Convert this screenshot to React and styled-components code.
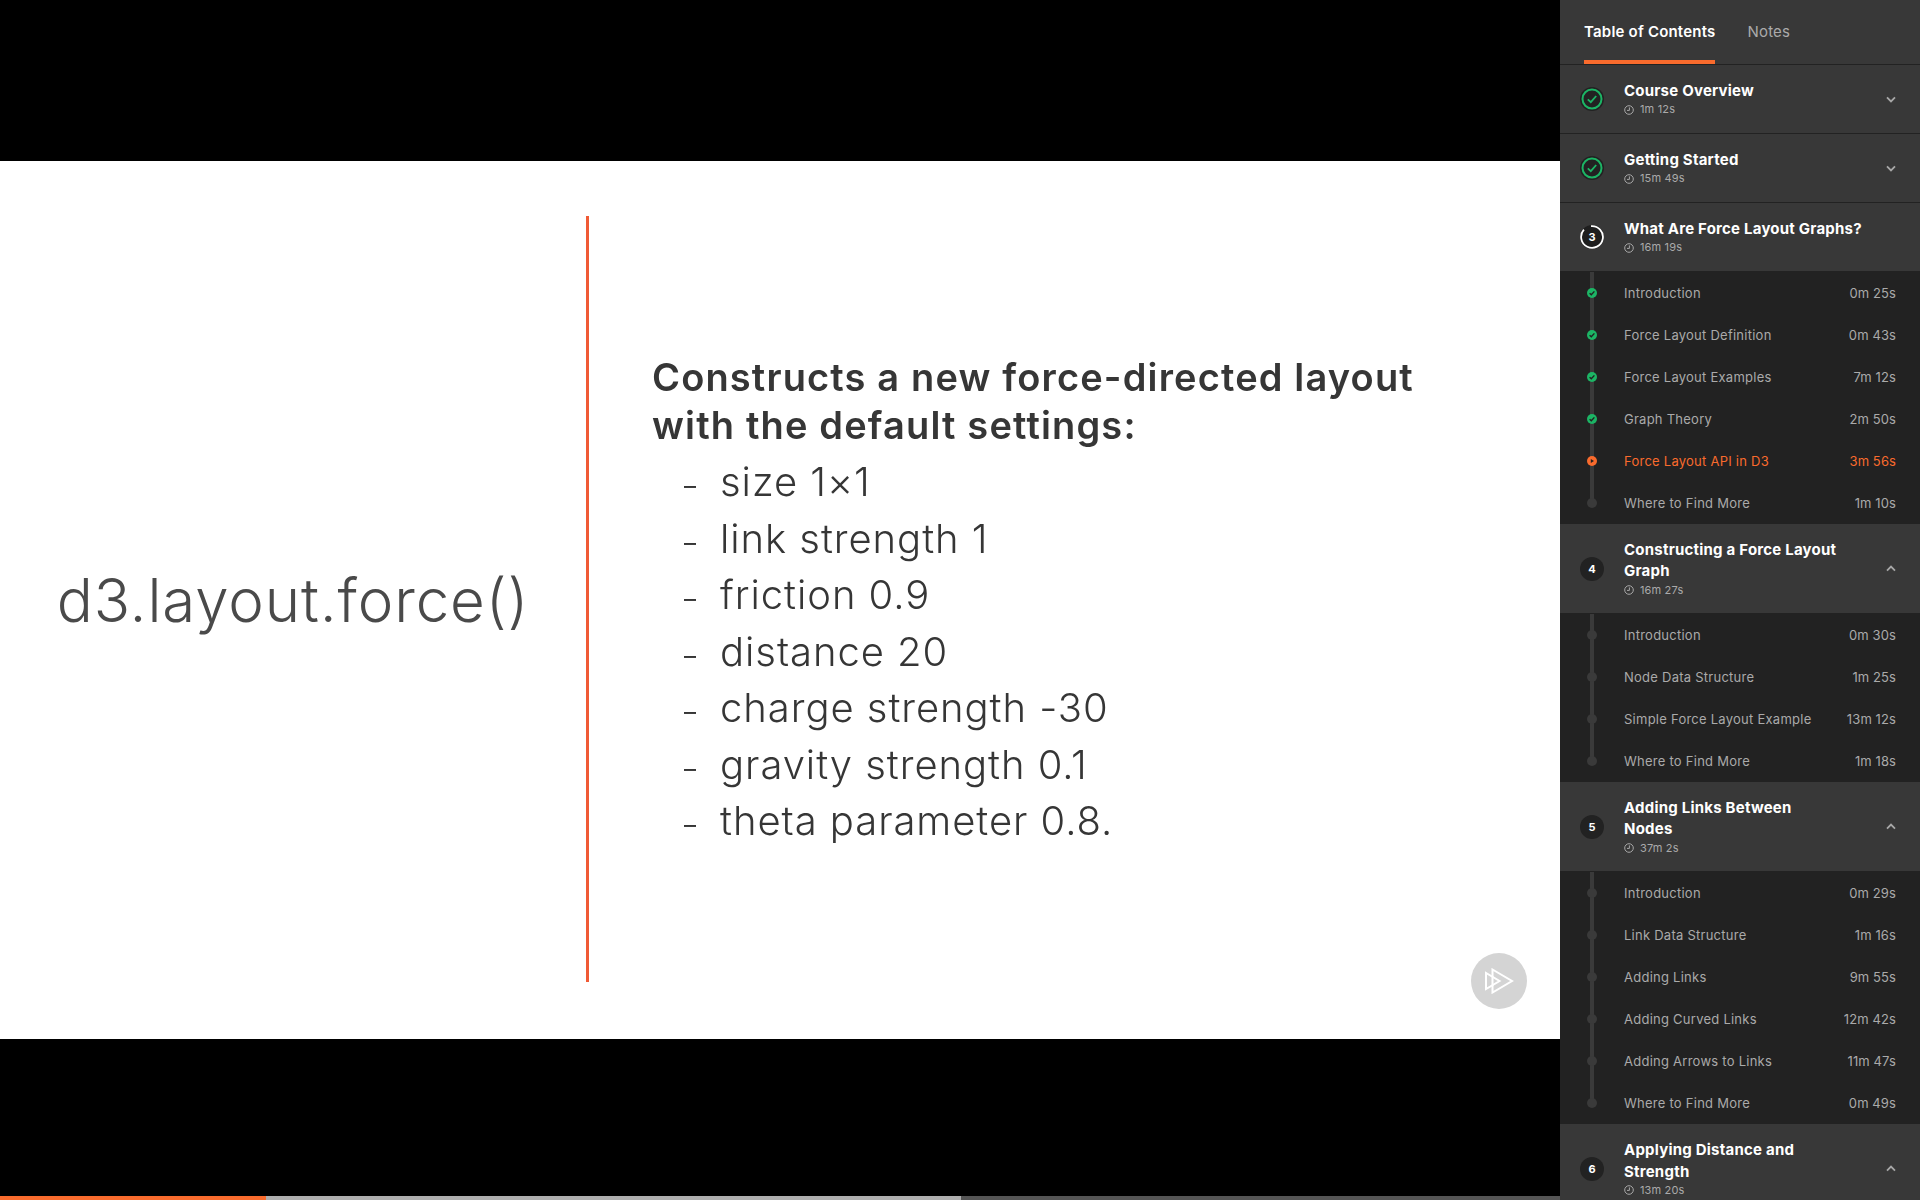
import React from 'react'
import styled, { createGlobalStyle } from 'styled-components'

const sections = [
  { title: 'Course Overview', time: '1m 12s', status: 'done' },
  { title: 'Getting Started', time: '15m 49s', status: 'done' },
  {
    title: 'What Are Force Layout Graphs?', time: '16m 19s', status: 'current', num: 3, open: true, noChevron: true,
    lessons: [
      ['Introduction', '0m 25s', 'done'],
      ['Force Layout Definition', '0m 43s', 'done'],
      ['Force Layout Examples', '7m 12s', 'done'],
      ['Graph Theory', '2m 50s', 'done'],
      ['Force Layout API in D3', '3m 56s', 'playing'],
      ['Where to Find More', '1m 10s', 'todo'],
    ],
  },
  {
    title: 'Constructing a Force Layout Graph', time: '16m 27s', num: 4, open: true,
    lessons: [
      ['Introduction', '0m 30s', 'todo'],
      ['Node Data Structure', '1m 25s', 'todo'],
      ['Simple Force Layout Example', '13m 12s', 'todo'],
      ['Where to Find More', '1m 18s', 'todo'],
    ],
  },
  {
    title: 'Adding Links Between Nodes', time: '37m 2s', num: 5, open: true,
    lessons: [
      ['Introduction', '0m 29s', 'todo'],
      ['Link Data Structure', '1m 16s', 'todo'],
      ['Adding Links', '9m 55s', 'todo'],
      ['Adding Curved Links', '12m 42s', 'todo'],
      ['Adding Arrows to Links', '11m 47s', 'todo'],
      ['Where to Find More', '0m 49s', 'todo'],
    ],
  },
  { title: 'Applying Distance and Strength', time: '13m 20s', num: 6, open: true },
]

const bullets = ['size 1×1', 'link strength 1', 'friction 0.9', 'distance 20', 'charge strength -30', 'gravity strength 0.1', 'theta parameter 0.8.']

function Clock() {
  return (
    <svg width="10" height="10" viewBox="0 0 10 10" fill="none" stroke="#a8a8a8" strokeWidth="1">
      <circle cx="5" cy="5" r="4.3" />
      <path d="M5.4 2.4V5.4H3" />
    </svg>
  )
}

function Chevron({ up }) {
  return (
    <svg width="10" height="7" viewBox="0 0 10 7" fill="none" stroke="#a8a8a8" strokeWidth="1.8">
      <path d={up ? 'M1 5.6L5 1.6L9 5.6' : 'M1 1.4L5 5.4L9 1.4'} />
    </svg>
  )
}

function StatusBadge({ section }) {
  if (section.status === 'done') {
    return (
      <svg width="24" height="24" viewBox="0 0 24 24" fill="none">
        <circle cx="12" cy="12" r="12" fill="#222" />
        <circle cx="12" cy="12" r="9.5" stroke="#1cb565" strokeWidth="2" />
        <path d="M7.8 12.4L10.8 15.2L16.2 9" stroke="#1cb565" strokeWidth="1.8" />
      </svg>
    )
  }
  if (section.status === 'current') {
    return (
      <BadgeWrap>
        <svg width="24" height="24" viewBox="0 0 24 24" fill="none">
          <circle cx="12" cy="12" r="12" fill="#1e1e1e" />
          <path d="M11 1.1A10.9 10.9 0 1 1 3.9 4.7" stroke="#fff" strokeWidth="1.8" />
        </svg>
        <BadgeNumber>{section.num}</BadgeNumber>
      </BadgeWrap>
    )
  }
  return <NumberCircle>{section.num}</NumberCircle>
}

function LessonDot({ status }) {
  if (status === 'done') {
    return (
      <DotSvg width="10" height="10" viewBox="0 0 10 10" fill="none">
        <circle cx="5" cy="5" r="5" fill="#1cb565" />
        <path d="M2.6 5.2L4.3 6.8L7.4 3.4" stroke="#222" strokeWidth="1.4" />
      </DotSvg>
    )
  }
  if (status === 'playing') {
    return (
      <DotSvg width="10" height="10" viewBox="0 0 10 10" fill="none">
        <circle cx="5" cy="5" r="5" fill="#f96b2d" />
        <path d="M3.8 3L7 5L3.8 7Z" fill="#222" />
      </DotSvg>
    )
  }
  return (
    <DotSvg width="10" height="10" viewBox="0 0 10 10">
      <circle cx="5" cy="5" r="5" fill="#3a3a3a" />
    </DotSvg>
  )
}

export default function App() {
  return (
    <>
      <GlobalStyle />
      <Page>
        <VideoColumn>
          <Slide>
            <CodePanel>
              <CodeTitle>d3.layout.force()</CodeTitle>
            </CodePanel>
            <Divider />
            <TextPanel>
              <SlideHeading>
                Constructs a new force-directed layout
                <br />
                with the default settings:
              </SlideHeading>
              <BulletList>
                {bullets.map((b) => (
                  <Bullet key={b}>
                    <Dash>–</Dash>
                    <span>{b}</span>
                  </Bullet>
                ))}
              </BulletList>
            </TextPanel>
            <Watermark>
              <svg width="30" height="26" viewBox="0 0 30 26" fill="none" stroke="#fff" strokeWidth="2">
                <path d="M8.5 1.5L28 13L8.5 24.5Z" />
                <path d="M2 5V21L15.5 13Z" />
              </svg>
            </Watermark>
          </Slide>
          <Progress>
            <ProgressPlayed />
            <ProgressBuffered />
          </Progress>
        </VideoColumn>
        <Sidebar>
          <Tabs>
            <Tab $active>Table of Contents</Tab>
            <Tab>Notes</Tab>
          </Tabs>
          {sections.map((s) => (
            <section key={s.title}>
              <SectionHeader>
                <BadgeCell>
                  <StatusBadge section={s} />
                </BadgeCell>
                <SectionText>
                  <SectionTitle>{s.title}</SectionTitle>
                  <SectionTime>
                    <Clock />
                    {s.time}
                  </SectionTime>
                </SectionText>
                {!s.noChevron && (
                  <ChevronCell>
                    <Chevron up={s.open} />
                  </ChevronCell>
                )}
              </SectionHeader>
              {s.lessons && (
                <LessonList>
                  {s.lessons.map(([name, time, status], i) => (
                    <Lesson key={name} $playing={status === 'playing'}>
                      <Marker $last={i === s.lessons.length - 1}>
                        <LessonDot status={status} />
                      </Marker>
                      <LessonName>{name}</LessonName>
                      <LessonTime>{time}</LessonTime>
                    </Lesson>
                  ))}
                </LessonList>
              )}
            </section>
          ))}
        </Sidebar>
      </Page>
    </>
  )
}

const GlobalStyle = createGlobalStyle`
  html, body {
    margin: 0;
    height: 100%;
    overflow: hidden;
    background: #000;
    font-family: "Inter", "Liberation Sans", sans-serif;
  }
`

const Page = styled.div`
  display: grid;
  grid-template-columns: 1560px 360px;
  height: 1200px;
  overflow: hidden;
`

const VideoColumn = styled.main`
  position: relative;
  display: flex;
  align-items: center;
  background: #000;
`

const Slide = styled.div`
  position: relative;
  display: flex;
  width: 1560px;
  height: 878px;
  background: #fff;
  color: #363636;
`

const CodePanel = styled.div`
  display: flex;
  align-items: center;
  justify-content: center;
  width: 586px;
`

const CodeTitle = styled.div`
  font-size: 60px;
  font-weight: 300;
  letter-spacing: 0.9px;
  color: #4a4a4a;
  filter: blur(0.5px);
`

const Divider = styled.div`
  width: 3px;
  margin: 55px 0 57px;
  background: #f05a35;
`

const TextPanel = styled.div`
  display: flex;
  flex-direction: column;
  justify-content: center;
  padding: 3px 0 0 63px;
  filter: blur(0.5px);
`

const SlideHeading = styled.div`
  font-size: 38px;
  font-weight: 600;
  line-height: 47.5px;
  letter-spacing: 1.15px;
`

const BulletList = styled.ul`
  list-style: none;
  margin: 4px 0 0;
  padding: 0 0 0 32px;
`

const Bullet = styled.li`
  display: flex;
  align-items: center;
  height: 56.5px;
  font-size: 40px;
  font-weight: 300;
  letter-spacing: 0.95px;
`

const Dash = styled.span`
  width: 36px;
  padding-top: 8px;
  font-size: 24px;
  font-weight: 400;
`

const Watermark = styled.div`
  position: absolute;
  right: 33px;
  bottom: 30px;
  display: flex;
  align-items: center;
  justify-content: center;
  width: 56px;
  height: 56px;
  border-radius: 50%;
  background: #d4d4d4;
`

const Progress = styled.div`
  position: absolute;
  left: 0;
  right: 0;
  bottom: 0;
  display: flex;
  height: 4px;
  background: #555;
`

const ProgressPlayed = styled.div`
  width: 266px;
  background: #f96b2d;
`

const ProgressBuffered = styled.div`
  width: 695px;
  background: #aeaeae;
`

const Sidebar = styled.aside`
  background: #383838;
  overflow: hidden;
  height: 1200px;
`

const Tabs = styled.div`
  display: flex;
  gap: 32px;
  height: 64px;
  padding-left: 24px;
  border-bottom: 1px solid #222;
`

const Tab = styled.div`
  display: flex;
  align-items: center;
  height: 64px;
  box-sizing: border-box;
  padding-top: 3px;
  font-size: 15px;
  letter-spacing: 0.2px;
  font-weight: ${(p) => (p.$active ? 600 : 400)};
  color: ${(p) => (p.$active ? '#fff' : '#aaa')};
  border-bottom: 4px solid ${(p) => (p.$active ? '#f96b2d' : 'transparent')};
`

const SectionHeader = styled.header`
  display: flex;
  align-items: center;
  min-height: 69px;
  padding: 15px 24px 15px 20px;
  box-sizing: border-box;
  background: #383838;
  border-bottom: 1px solid #222;
`

const BadgeCell = styled.div`
  display: flex;
  flex: none;
  width: 44px;
`

const BadgeWrap = styled.div`
  position: relative;
  width: 24px;
  height: 24px;
`

const BadgeNumber = styled.span`
  position: absolute;
  inset: 0;
  display: flex;
  align-items: center;
  justify-content: center;
  font-size: 11px;
  font-weight: 700;
  color: #fff;
`

const NumberCircle = styled.div`
  display: flex;
  align-items: center;
  justify-content: center;
  width: 24px;
  height: 24px;
  border-radius: 50%;
  background: #222;
  font-size: 11px;
  font-weight: 700;
  color: #fff;
`

const SectionText = styled.div`
  flex: 1;
  min-width: 0;
`

const SectionTitle = styled.div`
  font-size: 15px;
  font-weight: 700;
  line-height: 21.3px;
  letter-spacing: 0.22px;
  color: #fff;
`

const SectionTime = styled.div`
  display: flex;
  align-items: center;
  gap: 6px;
  margin-top: 1px;
  padding-bottom: 0.6px;
  font-size: 11px;
  letter-spacing: 0.15px;
  line-height: 15px;
  color: #aaa;
`

const ChevronCell = styled.div`
  display: flex;
  flex: none;
  margin-left: 47px;
`

const LessonList = styled.div`
  background: #222;
`

const Lesson = styled.div`
  display: flex;
  align-items: center;
  height: 42px;
  padding: 0 24px 0 27px;
  font-size: 13px;
  letter-spacing: 0.25px;
  color: ${(p) => (p.$playing ? '#f96b2d' : '#aaa')};
`

const Marker = styled.div`
  position: relative;
  display: flex;
  align-items: center;
  flex: none;
  width: 10px;
  height: 42px;
  margin-right: 27px;

  &::before {
    content: '';
    position: absolute;
    left: 3px;
    top: 0;
    width: 4px;
    height: ${(p) => (p.$last ? '21px' : '42px')};
    background: #3a3a3a;
  }
`

const DotSvg = styled.svg`
  position: relative;
`

const LessonName = styled.span`
  flex: 1;
  padding-bottom: 1px;
`

const LessonTime = styled.span`
  padding-bottom: 1px;
  letter-spacing: 0.1px;
`
